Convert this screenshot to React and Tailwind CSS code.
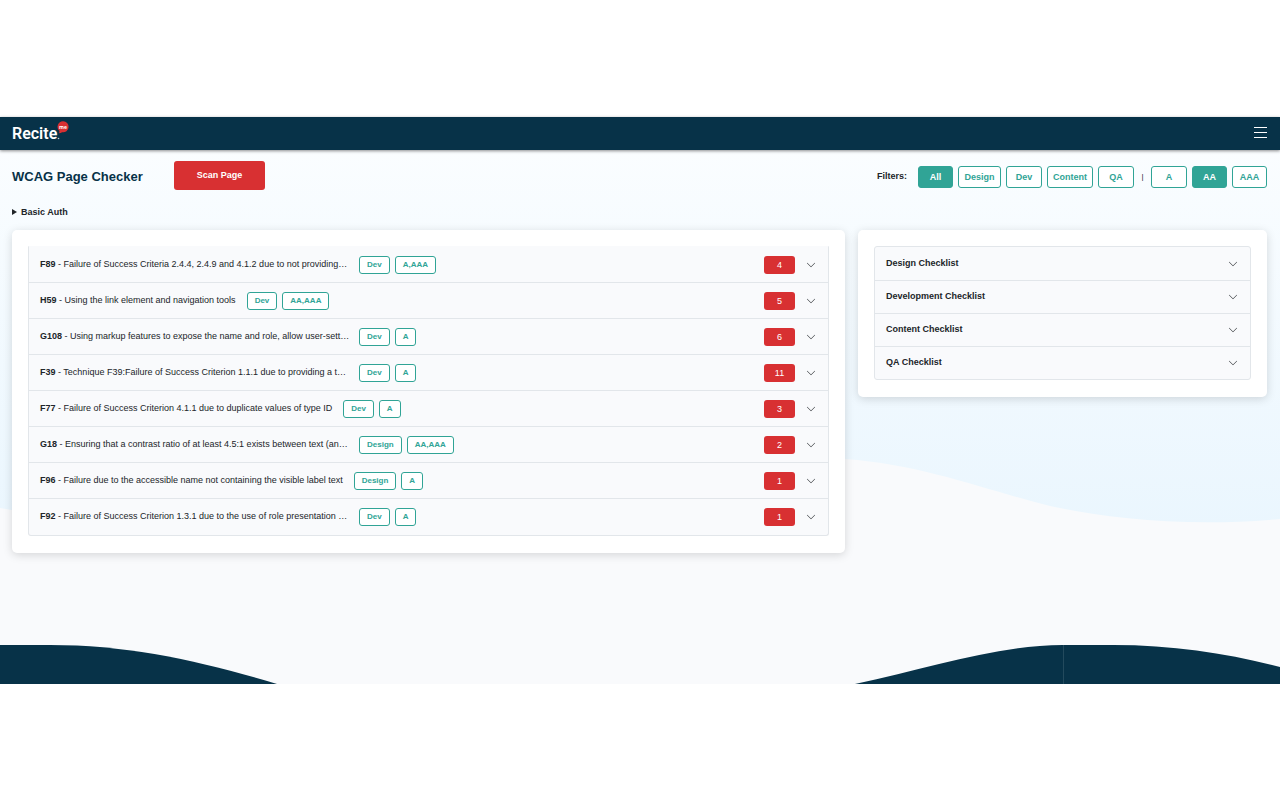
import { useState } from "react";

const issues = [
  { code: "F89", text: "Failure of Success Criteria 2.4.4, 2.4.9 and 4.1.2 due to not providing…", role: "Dev", level: "A,AAA", count: 4, clipped: true },
  { code: "H59", text: "Using the link element and navigation tools", role: "Dev", level: "AA,AAA", count: 5 },
  { code: "G108", text: "Using markup features to expose the name and role, allow user-sett…", role: "Dev", level: "A", count: 6, clipped: true },
  { code: "F39", text: "Technique F39:Failure of Success Criterion 1.1.1 due to providing a t…", role: "Dev", level: "A", count: 11, clipped: true },
  { code: "F77", text: "Failure of Success Criterion 4.1.1 due to duplicate values of type ID", role: "Dev", level: "A", count: 3 },
  { code: "G18", text: "Ensuring that a contrast ratio of at least 4.5:1 exists between text (an…", role: "Design", level: "AA,AAA", count: 2, clipped: true },
  { code: "F96", text: "Failure due to the accessible name not containing the visible label text", role: "Design", level: "A", count: 1 },
  { code: "F92", text: "Failure of Success Criterion 1.3.1 due to the use of role presentation …", role: "Dev", level: "A", count: 1, clipped: true },
];

const checklists = ["Design Checklist", "Development Checklist", "Content Checklist", "QA Checklist"];

const roleFilters = [
  { label: "All", width: "w-[35px]" },
  { label: "Design", width: "w-[43px]" },
  { label: "Dev", width: "w-[36px]" },
  { label: "Content", width: "w-[46px]" },
  { label: "QA", width: "w-[36px]" },
];

const levelFilters = [
  { label: "A", width: "w-[36px]" },
  { label: "AA", width: "w-[35px]" },
  { label: "AAA", width: "w-[35px]" },
];

function Chevron() {
  return (
    <svg className="h-[10px] w-[10px] shrink-0" viewBox="0 0 16 16" fill="#212529" aria-hidden="true">
      <path
        fillRule="evenodd"
        d="M1.646 4.646a.5.5 0 0 1 .708 0L8 10.293l5.646-5.647a.5.5 0 0 1 .708.708l-6 6a.5.5 0 0 1-.708 0l-6-6a.5.5 0 0 1 0-.708z"
      />
    </svg>
  );
}

function Logo() {
  return (
    <a href="#home" aria-label="Recite me" className="block">
      <svg className="block h-[26px] w-[60px]" viewBox="0 0 60 26">
        <text x="0" y="20" fill="#fff" fontFamily="Roboto, sans-serif" fontSize="16" fontWeight="600">
          Recite
        </text>
        <circle cx="46.500" cy="19.500" r="0.800" fill="#b9c7ce" />
        <path d="M51 2.300a5.500 5.500 0 1 1-.9 10.900c-.9.6-2 1-3.200 1 .5-.7.7-1.500.4-2.400A5.500 5.500 0 0 1 51 2.300z" fill="#d83032" />
        <text x="51" y="9.500" fill="#fff" textAnchor="middle" fontFamily="'Open Sans', sans-serif" fontSize="5" fontWeight="700">
          me
        </text>
      </svg>
    </a>
  );
}

function FilterButton({ label, width, active, onClick }) {
  const tone = active ? "bg-[#30a496] text-white" : "bg-white text-[#30a496]";
  return (
    <button
      type="button"
      aria-pressed={active}
      onClick={onClick}
      className={`h-[22px] rounded-[3px] border border-[#30a496] text-center text-[9px] font-bold leading-[20px] ${width} ${tone}`}
    >
      {label}
    </button>
  );
}

function Tag({ children }) {
  return (
    <span className="rounded-[3px] border border-[#30a496] bg-white px-[7px] text-[8px] font-bold leading-[16px] text-[#30a496]">
      {children}
    </span>
  );
}

function Waves() {
  return (
    <svg className="absolute inset-0 h-full w-full" viewBox="0 0 1280 534" preserveAspectRatio="none" aria-hidden="true">
      <defs>
        <linearGradient id="sky" x1="0" y1="0" x2="0" y2="1">
          <stop offset="0" stopColor="#fafdff" />
          <stop offset="1" stopColor="#eaf6fe" />
        </linearGradient>
      </defs>
      <rect width="1280" height="534" fill="#f9fafc" />
      <path
        d="M0 0H1280V369C1190 377 1110 369 1050 356C985 340 925 315 845 309C760 303 680 330 600 350C400 390 150 385 0 358Z"
        fill="url(#sky)"
      />
      <path d="M0 495H50C130 495 200 511 277 534H0Z" fill="#073248" />
      <path d="M855 534C930 518 1000 495 1063 495H1113C1175 495 1230 504 1280 517V534Z" fill="#073248" />
      <path d="M1063.500 495V534" stroke="#234a5d" strokeWidth="1" />
    </svg>
  );
}

export default function App() {
  const [role, setRole] = useState("All");
  const [level, setLevel] = useState("AA");

  return (
    <div className="min-h-screen bg-white py-[117px] font-['Liberation_Sans',Arial,sans-serif] text-[#212529]">
      <header className="relative z-10 flex h-[33px] items-center justify-between bg-[#073248] pb-[3px] pl-3 pr-[13px] shadow-[0_1px_3px_rgba(0,0,0,0.45)]">
        <Logo />
        <button type="button" aria-label="Menu" className="flex w-[13px] flex-col gap-[4px]">
          <span className="h-px w-full bg-white" />
          <span className="h-px w-full bg-white" />
          <span className="h-px w-full bg-white" />
        </button>
      </header>

      <main className="relative isolate">
        <div className="absolute inset-0 -z-10">
          <Waves />
        </div>
        <div className="px-3 pb-[131px] pt-[11px]">
          <div className="flex items-start justify-between pr-px">
            <div className="flex items-start">
              <h1 className="mt-[6px] w-[162px] text-[13px] font-bold leading-5 text-[#073248]">WCAG Page Checker</h1>
              <button type="button" className="h-[29px] w-[91px] rounded-[3px] bg-[#d83032] text-[9px] font-bold text-white">
                Scan Page
              </button>
            </div>
            <div className="mt-[5px] flex items-center gap-[5px]">
              <span className="mr-[6px] text-[9px] font-bold">Filters:</span>
              {roleFilters.map((f) => (
                <FilterButton key={f.label} {...f} active={role === f.label} onClick={() => setRole(f.label)} />
              ))}
              <span className="w-[7px] text-center text-[8px]">|</span>
              {levelFilters.map((f) => (
                <FilterButton key={f.label} {...f} active={level === f.label} onClick={() => setLevel(f.label)} />
              ))}
            </div>
          </div>

          <details className="mt-[15px] text-[9px] leading-[14px]">
            <summary className="flex cursor-pointer list-none items-center gap-1 font-bold">
              <svg className="h-[6px] w-[5px]" viewBox="0 0 5 6" fill="#212529" aria-hidden="true">
                <path d="M0 0L5 3L0 6Z" />
              </svg>
              Basic Auth
            </summary>
          </details>

          <div className="mt-[11px] grid grid-cols-[833fr_409fr] items-start gap-[13px] pr-px">
            <section className="rounded-[5px] bg-white px-4 pb-[17px] pt-4 shadow-[0_2px_10px_rgba(0,0,0,0.15)]">
              <ul className="rounded-b-[3px] border border-[#e2e6ea] border-t-[#f9fafc] bg-[#f9fafc] pb-px">
                {issues.map((issue) => (
                  <li key={issue.code} className="border-b border-[#e2e6ea] last:border-b-0">
                    <button type="button" className="flex h-[35px] w-full items-center pl-[11px] pr-3 text-left">
                      <span className={`whitespace-nowrap text-[9px] ${issue.clipped ? "w-[308px]" : ""}`}>
                        <b>{issue.code}</b> - {issue.text}
                      </span>
                      <span className="ml-[11px] flex gap-[5px]">
                        <Tag>{issue.role}</Tag>
                        <Tag>{issue.level}</Tag>
                      </span>
                      <span className="ml-auto mr-[11px] w-[31px] rounded-[3px] bg-[#d83032] text-center text-[9px] leading-[18px] text-white">
                        {issue.count}
                      </span>
                      <Chevron />
                    </button>
                  </li>
                ))}
              </ul>
            </section>

            <section className="rounded-[5px] bg-white px-4 pb-[17px] pt-4 shadow-[0_2px_10px_rgba(0,0,0,0.15)]">
              <ul className="rounded-[3px] border border-[#e2e6ea] bg-[#f9fafc] pt-px">
                {checklists.map((name) => (
                  <li key={name} className="border-b border-[#e2e6ea] last:border-b-0">
                    <button type="button" className="flex h-8 w-full items-center justify-between pl-[11px] pr-3 text-[9px] font-bold">
                      {name}
                      <Chevron />
                    </button>
                  </li>
                ))}
              </ul>
            </section>
          </div>
        </div>
      </main>
    </div>
  );
}
